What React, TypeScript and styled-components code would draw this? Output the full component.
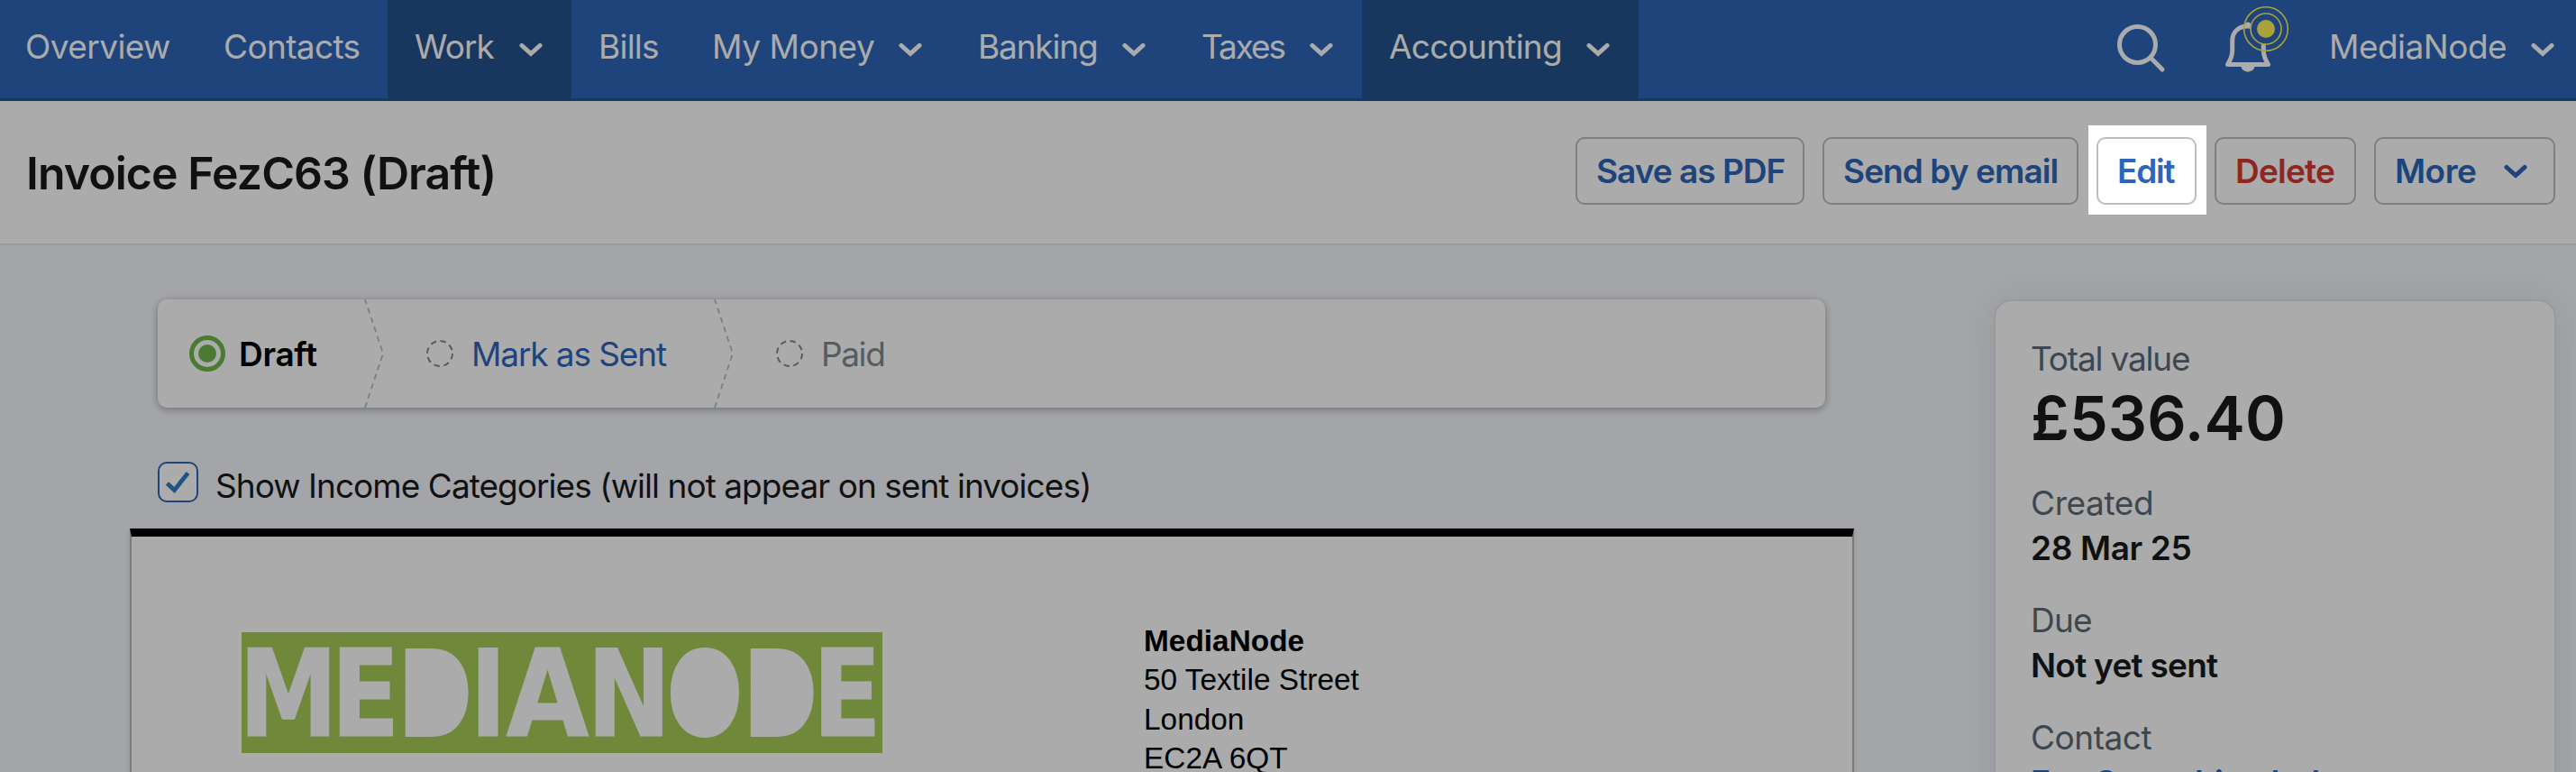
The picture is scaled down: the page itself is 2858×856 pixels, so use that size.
import React, { ReactElement } from "react"
import styled, { createGlobalStyle } from "styled-components"

const BLUE: string = "#2d66b8"
const DARK_BLUE: string = "#24528e"
const INK: string = "#191b1c"
const MUTED: string = "#5d6b77"
const OUTLINE: string = "#b6c0c5"

const GlobalStyle = createGlobalStyle`
  * {
    box-sizing: border-box;
  }
  body {
    margin: 0;
    overflow: hidden;
  }
`

const Page = styled.div`
  height: 856px;
  overflow: hidden;
  background-color: #f5f7fb;
  color: ${INK};
  font-family: Inter, "Liberation Sans", sans-serif;
  font-size: 37px;
`

// Single line of text, with letter spacing in pixels
const Label = styled.span<{ $track: number }>`
  white-space: nowrap;
  letter-spacing: ${({ $track }) => $track}px;
`

// Navigation

const NavBar = styled.nav`
  display: flex;
  height: 112px;
  background-color: ${BLUE};
  box-shadow: inset 0 -3px 0 ${DARK_BLUE};
  color: white;
`

const NavItem = styled.a<{ $width: number; $active?: boolean }>`
  display: flex;
  align-items: center;
  justify-content: space-between;
  width: ${({ $width }) => $width}px;
  height: 112px;
  padding: 0 32px 9px 30px;
  background-color: ${({ $active }) => ($active ? DARK_BLUE : "transparent")};

  &:first-child {
    padding-left: 28px;
  }
`

const NavTools = styled.div`
  display: flex;
  margin-left: auto;
  padding-right: 24px;
`

const SearchSvg = styled.svg`
  width: 56px;
  height: 103px;
  margin-right: 65px;
`

const BellSvg = styled.svg`
  width: 74px;
  height: 103px;
  margin-right: 42px;
`

const Account = styled.a`
  display: flex;
  align-items: center;
  justify-content: space-between;
  width: 250px;
  height: 103px;
`

const ChevronSvg = styled.svg<{ $drop?: number }>`
  width: 26px;
  height: 16px;
  margin-top: ${({ $drop = 0 }) => $drop}px;
  fill: none;
  stroke: currentColor;
  stroke-width: 5;
  stroke-linecap: round;
`

const Chevron = ({ drop }: { drop?: number }): ReactElement => (
  <ChevronSvg $drop={drop} viewBox="0 0 26 16">
    <path d="M3 3.5L13 12.5L23 3.5" />
  </ChevronSvg>
)

const SearchIcon = (): ReactElement => (
  <SearchSvg viewBox="0 0 56 103" fill="none" stroke="currentColor" strokeWidth="5">
    <circle cx="24.5" cy="49.5" r="20" />
    <path d="M39.5 64.5L52 77" strokeLinecap="round" />
  </SearchSvg>
)

const BellIcon = (): ReactElement => (
  <BellSvg viewBox="0 0 74 103" fill="none">
    <path
      d="M3.5 71.5C7.5 65 8.7 62 8.7 56V45C8.7 35 16 29 26 29C36 29 43.3 35 43.3 45V56C43.3 62 44.5 65 48.5 71.5Z"
      stroke="currentColor"
      strokeWidth="5"
      strokeLinejoin="round"
    />
    <path d="M23 30V27.5a3 3 0 0 1 6 0V30Z" fill="currentColor" />
    <path d="M18.5 73.5a7.3 6 0 0 0 15 0Z" fill="currentColor" />
    <circle cx="46" cy="32" r="17" fill={BLUE} stroke="#fdf25c" strokeWidth="1.6" />
    <circle cx="46" cy="32" r="24.3" stroke="#fdf25c" strokeWidth="1.6" />
    <circle cx="46" cy="32" r="10" fill="#fdf25c" />
  </BellSvg>
)

interface NavEntry {
  text: string
  width: number
  track: number
  menu?: boolean
  active?: boolean
}

const NAV_ENTRIES: NavEntry[] = [
  { text: "Overview", width: 218, track: -0.57 },
  { text: "Contacts", width: 212, track: -0.63 },
  { text: "Work", width: 204, track: -0.92, menu: true, active: true },
  { text: "Bills", width: 126, track: -0.77 },
  { text: "My Money", width: 295, track: -0.45, menu: true },
  { text: "Banking", width: 248, track: -1.16, menu: true },
  { text: "Taxes", width: 208, track: -2.1, menu: true },
  { text: "Accounting", width: 307, track: -0.74, menu: true, active: true },
]

// Page header

const Header = styled.header`
  display: flex;
  justify-content: space-between;
  height: 160px;
  padding: 0 23px 0 29px;
  background-color: white;
  border-bottom: 2px solid #e6e6ec;
`

const Title = styled.h1`
  margin: 0;
  font-size: 50px;
  font-weight: 600;
  line-height: 160px;
  letter-spacing: -0.95px;
`

const Actions = styled.div`
  display: flex;
  gap: 20px;
  padding-top: 40px;
`

const Button = styled.button<{ $width: number; $danger?: boolean }>`
  position: relative;
  display: flex;
  align-items: center;
  justify-content: space-between;
  width: ${({ $width }) => $width}px;
  height: 75px;
  padding: 0 29px 0 21px;
  border: 2px solid ${OUTLINE};
  border-radius: 10px;
  background-color: white;
  color: ${({ $danger }) => ($danger ? "#d83931" : BLUE)};
  font: inherit;
  font-weight: 600;
`

// Dims everything outside of its own box
const Spotlight = styled.span`
  position: absolute;
  top: -15px;
  left: -11px;
  z-index: 10;
  width: 131px;
  height: 99px;
  box-shadow: 0 0 0 3000px rgba(0, 0, 0, 0.33);
  pointer-events: none;
`

// Invoice column

const Main = styled.main`
  display: flex;
  align-items: flex-start;
  gap: 155px;
  padding: 60px 0 0 144px;
`

const InvoiceColumn = styled.section`
  width: 1913px;
`

const Steps = styled.div`
  display: flex;
  height: 120px;
  margin: 0 32px 60px 31px;
  border-radius: 10px;
  background-color: white;
  box-shadow: 0 2px 8px rgba(40, 45, 60, 0.4);
`

const Step = styled.div<{ $width: number; $indent: number; $gap: number; $color: string }>`
  display: flex;
  align-items: center;
  gap: ${({ $gap }) => $gap}px;
  width: ${({ $width }) => $width}px;
  padding-left: ${({ $indent }) => $indent}px;
  color: ${({ $color }) => $color};
`

const DraftLabel = styled(Label)`
  font-weight: 600;
`

const StepSvg = styled.svg<{ $size: number }>`
  flex: none;
  width: ${({ $size }) => $size}px;
  height: ${({ $size }) => $size}px;
`

const DividerSvg = styled.svg`
  flex: none;
  width: 22px;
  height: 120px;
  margin-left: auto;
`

const CurrentMark = (): ReactElement => (
  <StepSvg $size={40} viewBox="0 0 40 40">
    <circle cx="20" cy="20" r="17.5" fill="none" stroke="#70b74b" strokeWidth="5" />
    <circle cx="20" cy="20" r="10" fill="#70b74b" />
  </StepSvg>
)

const PendingMark = (): ReactElement => (
  <StepSvg $size={30} viewBox="0 0 30 30">
    <circle
      cx="15"
      cy="15"
      r="14"
      fill="none"
      stroke="#7f8b92"
      strokeWidth="2"
      strokeDasharray="6.5 4.5"
    />
  </StepSvg>
)

const Divider = (): ReactElement => (
  <DividerSvg viewBox="0 0 22 120" fill="none" stroke="#b4bfc3" strokeWidth="1.8">
    <path d="M1 0L20 57Q21 60 20 63L1 120" strokeDasharray="6.2 4.8" strokeDashoffset="1" />
  </DividerSvg>
)

const CategoryToggle = styled.div`
  display: flex;
  gap: 19px;
  height: 74px;
  margin-left: 31px;
  line-height: 53px;
`

const CheckboxSvg = styled.svg`
  width: 45px;
  height: 45px;
`

const Checkbox = (): ReactElement => (
  <CheckboxSvg viewBox="0 0 45 45" fill="none">
    <rect x="1" y="1" width="43" height="43" rx="9" fill="white" stroke={BLUE} strokeWidth="2" />
    <path d="M10.5 24L18.5 31.5L33.5 12.5" stroke="#317dc0" strokeWidth="4.8" />
  </CheckboxSvg>
)

const Paper = styled.article`
  display: grid;
  grid-template-columns: 1001px 1fr;
  height: 400px;
  padding: 94px 0 0 122px;
  border: 2px solid #b9b9bd;
  border-top: 9px solid black;
  background-color: white;
  box-shadow: 0 2px 5px rgba(0, 0, 0, 0.15);
`

const LogoSvg = styled.svg`
  width: 711px;
  height: 134px;
  margin-top: 12px;
  overflow: visible;
  background-color: #a6cb55;
  fill: white;
  stroke: white;
  font-family: "DejaVu Sans Condensed", "DejaVu Sans", sans-serif;
  font-stretch: condensed;
  font-weight: bold;
`

// Solid letters are drawn smaller with a heavy stroke that closes their counters
interface LogoLetter {
  glyph: string
  x: number
  scale: number
  solid?: boolean
}

const LOGO_LETTERS: LogoLetter[] = [
  { glyph: "M", x: -3, scale: 0.916 },
  { glyph: "E", x: 99, scale: 0.93 },
  { glyph: "D", x: 189.5, scale: 0.79, solid: true },
  { glyph: "I", x: 253, scale: 0.92 },
  { glyph: "A", x: 293.5, scale: 0.985 },
  { glyph: "N", x: 383, scale: 0.927 },
  { glyph: "O", x: 486.5, scale: 0.815, solid: true },
  { glyph: "D", x: 572.5, scale: 0.79, solid: true },
  { glyph: "E", x: 633.5, scale: 0.93 },
]

const Logo = (): ReactElement => (
  <LogoSvg viewBox="0 0 711 134">
    {LOGO_LETTERS.map(({ glyph, x, scale, solid }) => (
      <text
        key={x}
        transform={`translate(${x} ${solid ? 98.5 : 115}) scale(${scale} 1)`}
        fontSize={solid ? 88 : 134}
        strokeWidth={solid ? 34 : 1}
      >
        {glyph}
      </text>
    ))}
  </LogoSvg>
)

const Address = styled.address`
  color: black;
  font: normal 33.4px/43.3px "Liberation Sans", Arial, sans-serif;
`

// Summary card

const Summary = styled.aside`
  width: 624px;
  height: 700px;
  padding: 39px;
  border: 2px solid #e5e6ec;
  border-radius: 20px;
  background-color: white;
  box-shadow: 0 0 44px rgba(90, 120, 150, 0.14);
  line-height: 50px;
`

const Field = styled.div`
  display: flex;
  flex-direction: column;
  margin-bottom: 30px;
`

const FieldName = styled(Label)`
  color: ${MUTED};
`

const FieldValue = styled(Label)<{ $link?: boolean }>`
  color: ${({ $link }) => ($link ? BLUE : INK)};
  font-weight: 600;
`

const Total = styled(FieldValue)`
  font-size: 68px;
  line-height: 80px;
`

const App = (): ReactElement => (
  <Page>
    <GlobalStyle />
    <NavBar>
      {NAV_ENTRIES.map(({ text, width, track, menu, active }) => (
        <NavItem key={text} $width={width} $active={active}>
          <Label $track={track}>{text}</Label>
          {menu && <Chevron drop={6} />}
        </NavItem>
      ))}
      <NavTools>
        <SearchIcon />
        <BellIcon />
        <Account>
          <Label $track={-0.51}>MediaNode</Label>
          <Chevron drop={6} />
        </Account>
      </NavTools>
    </NavBar>
    <Header>
      <Title>Invoice FezC63 (Draft)</Title>
      <Actions>
        <Button $width={254}>
          <Label $track={-0.99}>Save as PDF</Label>
        </Button>
        <Button $width={284}>
          <Label $track={-0.93}>Send by email</Label>
        </Button>
        <Button $width={111}>
          <Label $track={-1.2}>Edit</Label>
          <Spotlight />
        </Button>
        <Button $width={157} $danger>
          <Label $track={-0.77}>Delete</Label>
        </Button>
        <Button $width={201}>
          <Label $track={-0.51}>More</Label>
          <Chevron />
        </Button>
      </Actions>
    </Header>
    <Main>
      <InvoiceColumn>
        <Steps>
          <Step $width={251} $indent={35} $gap={15} $color="black">
            <CurrentMark />
            <DraftLabel $track={-0.33}>Draft</DraftLabel>
            <Divider />
          </Step>
          <Step $width={388} $indent={47} $gap={20} $color={BLUE}>
            <PendingMark />
            <Label $track={-1.12}>Mark as Sent</Label>
            <Divider />
          </Step>
          <Step $width={300} $indent={47} $gap={20} $color="#7f8b92">
            <PendingMark />
            <Label $track={-1.4}>Paid</Label>
          </Step>
        </Steps>
        <CategoryToggle>
          <Checkbox />
          <Label $track={-0.96}>Show Income Categories (will not appear on sent invoices)</Label>
        </CategoryToggle>
        <Paper>
          <Logo />
          <Address>
            <b>MediaNode</b>
            <br />
            50 Textile Street
            <br />
            London
            <br />
            EC2A 6QT
          </Address>
        </Paper>
      </InvoiceColumn>
      <Summary>
        <Field>
          <FieldName $track={-1.18}>Total value</FieldName>
          <Total $track={0.14}>£536.40</Total>
        </Field>
        <Field>
          <FieldName $track={-0.39}>Created</FieldName>
          <FieldValue $track={-0.37}>28 Mar 25</FieldValue>
        </Field>
        <Field>
          <FieldName $track={-0.79}>Due</FieldName>
          <FieldValue $track={-0.74}>Not yet sent</FieldValue>
        </Field>
        <Field>
          <FieldName $track={-0.46}>Contact</FieldName>
          <FieldValue $track={-0.61} $link>
            Fez Consulting Ltd
          </FieldValue>
        </Field>
      </Summary>
    </Main>
  </Page>
)

export default App
